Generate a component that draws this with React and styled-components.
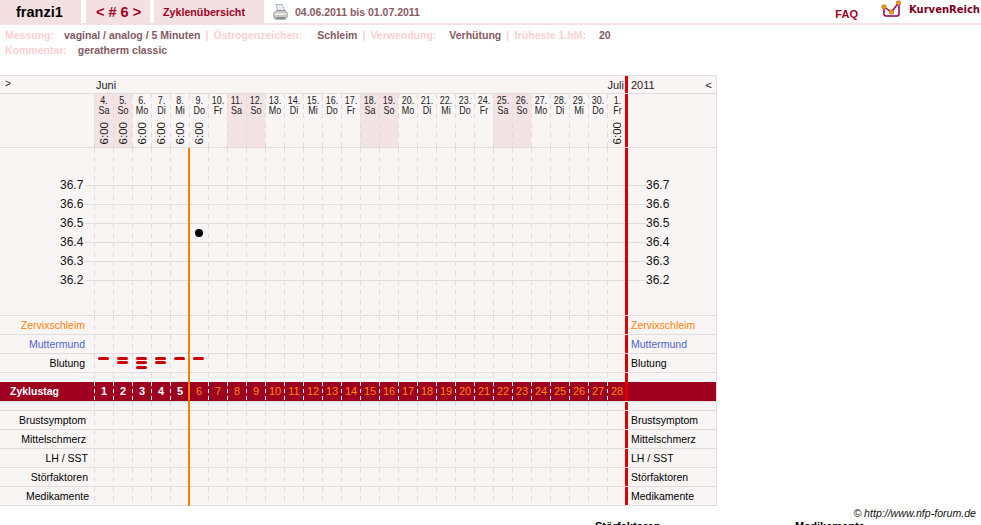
import React from 'react';
import styled, { createGlobalStyle } from 'styled-components';

const GlobalStyle = createGlobalStyle`
  html, body {
    margin: 0;
    padding: 0;
    background: #fff;
  }
  body {
    font-family: "Liberation Sans", Arial, sans-serif;
    font-size: 11px;
    color: #000;
  }
`;

const Page = styled.div`
  position: relative;
  width: 981px;
  height: 525px;
  overflow: hidden;
`;

// top navigation
const TopBar = styled.div`
  display: flex;
  align-items: stretch;
  height: 23px;
  border-bottom: 2px solid #f3e0e2;
`;

const Tab = styled.div`
  display: flex;
  align-items: center;
  box-sizing: border-box;
  width: ${(p) => p.$w}px;
  padding-left: ${(p) => p.$pl}px;
  margin-right: ${(p) => p.$gap || 0}px;
  background: #f3e0e2;
  color: ${(p) => p.$color || '#a00020'};
  font-size: ${(p) => p.$size || 10.7}px;
  font-weight: bold;
  white-space: pre;
`;

const PrinterWrap = styled.div`
  display: flex;
  align-items: center;
  margin-left: 9px;
  margin-right: 7px;
`;

const DateRange = styled.div`
  align-self: center;
  color: #8a5a62;
  font-size: 10.5px;
  font-weight: bold;
`;

const Faq = styled.div`
  align-self: center;
  margin-left: auto;
  margin-top: 5px;
  color: #a00020;
  font-size: 11px;
  font-weight: bold;
`;

const Logo = styled.div`
  display: flex;
  align-items: flex-start;
  margin-left: 23px;
  margin-right: 1px;
`;

const LogoText = styled.span`
  margin-left: 8px;
  margin-top: 4px;
  color: #7a0020;
  font-family: "DejaVu Sans", Verdana, sans-serif;
  font-size: 10px;
  font-weight: bold;
`;

// info lines below the navigation
const Info = styled.div`
  height: 50px;
  padding: 3px 0 0 5px;
  box-sizing: border-box;
  font-size: 10.5px;
  font-weight: bold;
  line-height: 15px;
  white-space: pre;
`;

const InfoLabel = styled.span`
  color: #fad0d2;
`;

const InfoSep = styled.span`
  margin: 0 5px;
  color: #fad0d2;
`;

const InfoValue = styled.span`
  color: #845a62;
  margin-left: ${(p) => p.$ml}px;
`;

// chart
const Chart = styled.div`
  position: relative;
  width: 717px;
  box-sizing: border-box;
  border-top: 1px solid #dedcdc;
  border-right: 1px solid #dedcdc;
  background: #faf5f5;
`;

const Row = styled.div`
  display: flex;
  height: ${(p) => p.$h || 18}px;
  border-bottom: ${(p) => (p.$plain ? 0 : '1px solid #dedcdc')};
`;

const Label = styled.div`
  flex: none;
  display: flex;
  align-items: center;
  justify-content: flex-end;
  box-sizing: border-box;
  width: 94px;
  padding-right: ${(p) => p.$pr || 9}px;
  color: ${(p) => p.$color || '#000'};
  font-size: 10.5px;
`;

const Cell = styled.div`
  flex: none;
  position: relative;
  box-sizing: border-box;
  width: 19px;
  background-image: repeating-linear-gradient(
    to bottom,
    #dedcdc 0 5px,
    transparent 5px 9.5px
  );
  background-size: 1px 100%;
  background-repeat: no-repeat;
  background-color: ${(p) => (p.$weekend ? '#f3e3e5' : 'transparent')};
`;

const DayCell = styled(Cell)`
  display: flex;
  flex-direction: column;
  align-items: center;
  padding-left: 1px;
`;

const RightLabel = styled.div`
  flex: 1;
  display: flex;
  align-items: center;
  padding-left: 3px;
  border-left: 3px solid #dd0000;
  margin-left: -1px;
  color: ${(p) => p.$color || '#000'};
  font-size: 10.5px;
`;

const MonthRow = styled.div`
  display: flex;
  align-items: center;
  height: 17px;
  border-bottom: 1px solid #dedcdc;
  font-size: 11px;
  color: #222;
`;

const Toggle = styled.span`
  width: 94px;
  padding-left: 5px;
  box-sizing: border-box;
  font-size: 10px;
  margin-top: -3px;
`;

const Months = styled.div`
  flex: none;
  display: flex;
  justify-content: space-between;
  box-sizing: border-box;
  width: 531px;
  padding: 0 1px 0 2px;
`;

const MonthEnd = styled.div`
  flex: 1;
  display: flex;
  justify-content: space-between;
  align-items: center;
  align-self: stretch;
  padding: 0 4px 0 3px;
  border-left: 3px solid #dd0000;
`;

const DayText = styled.span`
  margin-top: 2px;
  font-size: 11.5px;
  line-height: 9.5px;
  color: #222;
  text-align: center;
  white-space: pre;
  transform: scaleX(0.78);
`;

const DayTime = styled.span`
  margin-top: 7px;
  writing-mode: vertical-rl;
  transform: rotate(180deg);
  font-size: 11.5px;
  line-height: 12px;
  color: #222;
`;

const TempArea = styled.div`
  height: 167px;
  border-bottom: 1px solid #dedcdc;
`;

const TempRow = styled.div`
  display: flex;
  height: ${(p) => p.$h || 19}px;
  background: ${(p) =>
    p.$line
      ? 'linear-gradient(#dedcdc, #dedcdc) no-repeat 85px 9px / 561px 1px'
      : 'none'};
`;

const TempLabel = styled.div`
  flex: none;
  width: 94px;
  padding-left: 60px;
  box-sizing: border-box;
  font-size: 12px;
  line-height: 19px;
  color: #111;
`;

const TempLabelRight = styled.div`
  flex: 1;
  padding-left: 18px;
  border-left: 3px solid #dd0000;
  margin-left: -1px;
  font-size: 12px;
  line-height: 19px;
  color: #111;
`;

const Dot = styled.span`
  position: absolute;
  top: -4px;
  left: 6px;
  width: 8px;
  height: 8px;
  border-radius: 50%;
  background: #000;
`;

const Bleed = styled.span`
  display: block;
  width: 11px;
  height: 3px;
  margin-top: 1.5px;
  border-radius: 2px;
  background: #cc0000;
`;

const BleedStack = styled.div`
  position: absolute;
  top: 1px;
  left: 4px;
`;

const CycleRow = styled.div`
  display: flex;
  height: 19px;
  background: #a00020;
  border-bottom: 1px solid #dedcdc;
`;

const CycleTitle = styled.div`
  flex: none;
  width: 94px;
  padding-left: 10px;
  box-sizing: border-box;
  color: #fff;
  font-size: 10.5px;
  font-weight: bold;
  line-height: 19px;
`;

const CycleCell = styled.div`
  flex: none;
  width: 19px;
  padding-left: 1px;
  box-sizing: border-box;
  text-align: center;
  color: ${(p) => (p.$past ? '#fff' : '#ff8a00')};
  font-size: 11px;
  font-weight: ${(p) => (p.$past ? 'bold' : 'normal')};
  line-height: 19px;
  background: repeating-linear-gradient(to bottom, #fff 0 4px, transparent 4px 7px) no-repeat 0 0 / 1px 100%;
`;

const CycleEnd = styled.div`
  flex: 1;
  margin-left: -1px;
  border-left: 3px solid #dd0000;
`;

const TodayLine = styled.div`
  position: absolute;
  top: 72px;
  bottom: 0;
  left: 188px;
  width: 2px;
  background: #ff8000;
`;

const Copyright = styled.div`
  margin-top: 1px;
  padding-right: 5px;
  text-align: right;
  font-size: 10.6px;
  font-style: italic;
  color: #111;
`;

const TableHeads = styled.div`
  display: flex;
  padding-left: 595px;
  margin-top: 1px;
  font-size: 11px;
  font-weight: bold;
`;

const TableHead = styled.span`
  flex: none;
  width: 200px;
`;

const days = [
  ['4.', 'Sa'], ['5.', 'So'], ['6.', 'Mo'], ['7.', 'Di'], ['8.', 'Mi'], ['9.', 'Do'], ['10.', 'Fr'],
  ['11.', 'Sa'], ['12.', 'So'], ['13.', 'Mo'], ['14.', 'Di'], ['15.', 'Mi'], ['16.', 'Do'], ['17.', 'Fr'],
  ['18.', 'Sa'], ['19.', 'So'], ['20.', 'Mo'], ['21.', 'Di'], ['22.', 'Mi'], ['23.', 'Do'], ['24.', 'Fr'],
  ['25.', 'Sa'], ['26.', 'So'], ['27.', 'Mo'], ['28.', 'Di'], ['29.', 'Mi'], ['30.', 'Do'], ['1.', 'Fr'],
];

const hasTime = (i) => i < 6 || i === 27;
const isWeekend = (d) => d[1] === 'Sa' || d[1] === 'So';
const bleeding = [1, 2, 3, 2, 1, 1];

const Printer = () => (
  <svg width="15" height="16" viewBox="0 0 15 16">
    <path d="M3 0.5h6l3 6H5z" fill="#e8eef6" stroke="#8a97a6" strokeWidth="0.7" />
    <path d="M0.8 9l3-2.5h8l2.4 2.5v4l-2 2.3H2.5l-1.7-2z" fill="#c6c8c6" stroke="#7b8084" strokeWidth="0.7" />
    <path d="M1.5 9.2h12v1.6h-12z" fill="#f0f0ec" />
    <path d="M3 13h9v2H3z" fill="#8c9094" />
  </svg>
);

const LogoMark = () => (
  <svg width="20" height="19" viewBox="0 0 20 19">
    <path d="M3 7v7q0 2 2 2h11q2 0 2-2V3" fill="none" stroke="#8c0050" strokeWidth="1.5" />
    <path d="M3 7l7.5 5 7-9" fill="none" stroke="#8c0050" strokeWidth="1.5" />
    <circle cx="3" cy="7" r="2.3" fill="#f59a1c" stroke="#a04a00" strokeWidth="0.5" />
    <circle cx="10.5" cy="12" r="2.3" fill="#f59a1c" stroke="#a04a00" strokeWidth="0.5" />
    <circle cx="17.5" cy="3" r="2.3" fill="#f59a1c" stroke="#a04a00" strokeWidth="0.5" />
  </svg>
);

const Cells = () => days.map((d) => <Cell key={d[0]} />);

const DataRow = ({ label, color, pr }) => (
  <Row>
    <Label $color={color} $pr={pr}>{label}</Label>
    <Cells />
    <RightLabel $color={color}>{label}</RightLabel>
  </Row>
);

const temps = ['36.7', '36.6', '36.5', '36.4', '36.3', '36.2'];

export default function App() {
  return (
    <Page>
      <GlobalStyle />
      <TopBar>
        <Tab $w={81} $pl={16} $gap={5} $color="#000" $size={14.5}>franzi1</Tab>
        <Tab $w={64} $pl={10} $gap={4} $size={14.5}>&lt; # 6 &gt;</Tab>
        <Tab $w={110} $pl={9}>Zyklenübersicht</Tab>
        <PrinterWrap><Printer /></PrinterWrap>
        <DateRange>04.06.2011 bis 01.07.2011</DateRange>
        <Faq>FAQ</Faq>
        <Logo>
          <LogoMark />
          <LogoText>KurvenReich</LogoText>
        </Logo>
      </TopBar>

      <Info>
        <div>
          <InfoLabel>Messung:</InfoLabel>
          <InfoValue $ml={10}>vaginal / analog / 5 Minuten</InfoValue>
          <InfoSep>|</InfoSep>
          <InfoLabel>Östrogenzeichen:</InfoLabel>
          <InfoValue $ml={15}>Schleim</InfoValue>
          <InfoSep>|</InfoSep>
          <InfoLabel>Verwendung:</InfoLabel>
          <InfoValue $ml={13}>Verhütung</InfoValue>
          <InfoSep>|</InfoSep>
          <InfoLabel>früheste 1.hM:</InfoLabel>
          <InfoValue $ml={13}>20</InfoValue>
        </div>
        <div>
          <InfoLabel>Kommentar:</InfoLabel>
          <InfoValue $ml={11}>geratherm classic</InfoValue>
        </div>
      </Info>

      <Chart>
        <MonthRow>
          <Toggle>&gt;</Toggle>
          <Months>
            <span>Juni</span>
            <span>Juli</span>
          </Months>
          <MonthEnd>
            <span>2011</span>
            <span>&lt;</span>
          </MonthEnd>
        </MonthRow>

        <Row $h={53}>
          <Label />
          {days.map((d, i) => (
            <DayCell key={d[0]} $weekend={isWeekend(d)}>
              <DayText>{`${d[0]}\n${d[1]}`}</DayText>
              {hasTime(i) && <DayTime>6:00</DayTime>}
            </DayCell>
          ))}
          <RightLabel />
        </Row>

        <TempArea>
          <TempRow $h={28}>
            <Label />
            <Cells />
            <RightLabel />
          </TempRow>
          {temps.map((t) => (
            <TempRow key={t} $line>
              <TempLabel>{t}</TempLabel>
              {days.map((d, i) => (
                <Cell key={d[0]}>{t === '36.4' && i === 5 && <Dot />}</Cell>
              ))}
              <TempLabelRight>{t}</TempLabelRight>
            </TempRow>
          ))}
          <TempRow $h={25}>
            <Label />
            <Cells />
            <RightLabel />
          </TempRow>
        </TempArea>

        <DataRow label="Zervixschleim" color="#ff8000" />
        <DataRow label="Muttermund" color="#4a64d0" />
        <Row>
          <Label>Blutung</Label>
          {days.map((d, i) => (
            <Cell key={d[0]}>
              {i < bleeding.length && (
                <BleedStack>
                  {Array.from({ length: bleeding[i] }, (_, n) => <Bleed key={n} />)}
                </BleedStack>
              )}
            </Cell>
          ))}
          <RightLabel>Blutung</RightLabel>
        </Row>
        <Row $h={9} $plain>
          <Label />
          <Cells />
          <RightLabel />
        </Row>
        <CycleRow>
          <CycleTitle>Zyklustag</CycleTitle>
          {days.map((d, i) => (
            <CycleCell key={d[0]} $past={i < 5}>{i + 1}</CycleCell>
          ))}
          <CycleEnd />
        </CycleRow>
        <Row $h={8}>
          <Label />
          <Cells />
          <RightLabel />
        </Row>
        <DataRow label="Brustsymptom" pr={8} />
        <DataRow label="Mittelschmerz" pr={8} />
        <DataRow label="LH / SST" pr={6} />
        <DataRow label="Störfaktoren" pr={6} />
        <DataRow label="Medikamente" pr={5} />
        <TodayLine />
      </Chart>

      <Copyright>© http://www.nfp-forum.de</Copyright>
      <TableHeads>
        <TableHead>Störfaktoren</TableHead>
        <TableHead>Medikamente</TableHead>
      </TableHeads>
    </Page>
  );
}
